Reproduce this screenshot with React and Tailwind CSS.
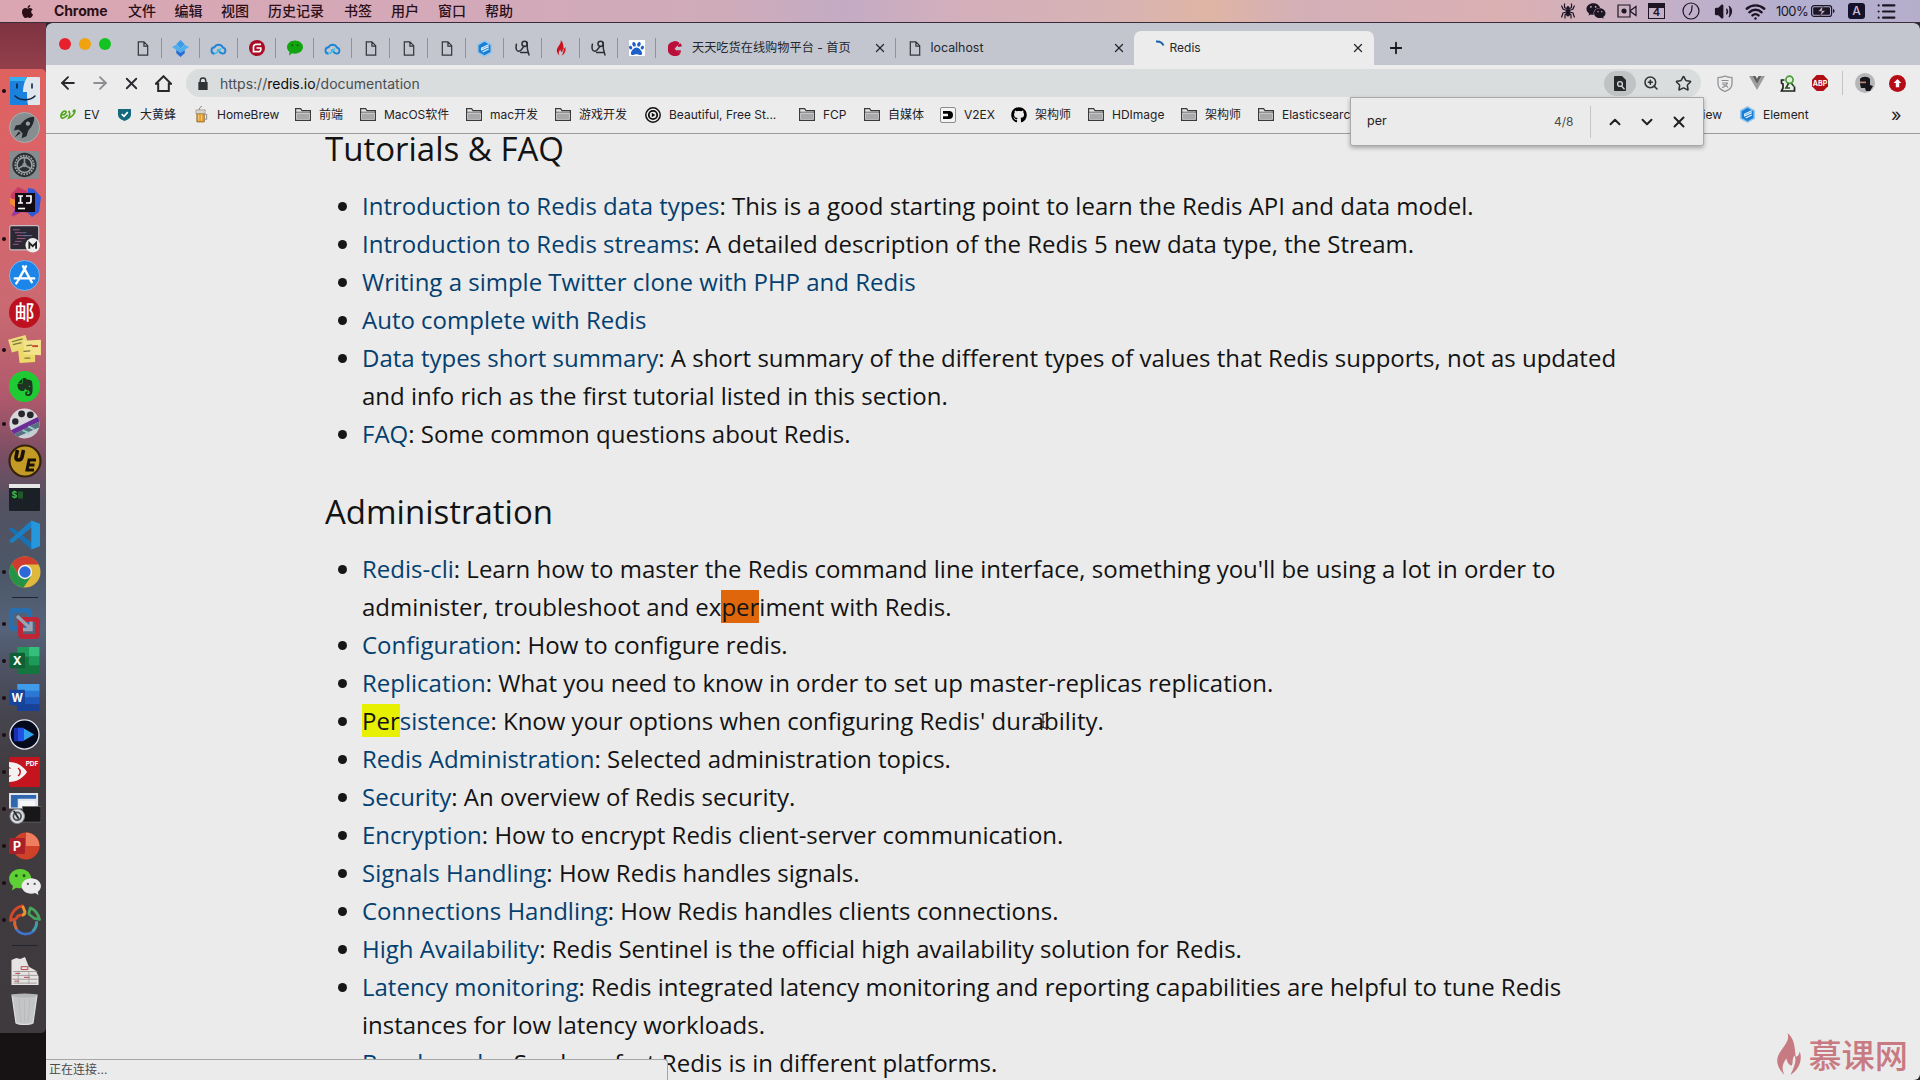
import { FaApple, FaWeixin, FaGithub, FaPaw } from "react-icons/fa";
import { SiEvernote } from "react-icons/si";
import { ArrowLeft, ArrowRight, X, Plus, Star, ZoomIn, ChevronUp, ChevronDown, Wifi, Volume2, List } from "lucide-react";

function Flame({ className }) {
  return (
    <svg viewBox="0 0 24 42" className={className} fill="currentColor">
      <path d="M11 0C14 8 6 14 2 22c-3 7 1 14 6 19C5 35 6 30 10 25c1 4 2 6 5 7 2-3 0-7 3-10 2 5 0 10-4 19 8-5 12-14 9-23-1 4-2 5-4 5C18 13 18 6 11 0Z" />
    </svg>
  );
}
function Page() {
  return (
    <svg viewBox="0 0 12 16" className="h-[15px] w-[12px]" fill="none" stroke="#33363b" strokeWidth="1.3">
      <path d="M1 1h6l4 4v10H1ZM7 1v4.5h4" />
    </svg>
  );
}
function Cloud() {
  return (
    <svg viewBox="0 0 18 14" className="h-[13px] w-[17px]" fill="none" stroke="#1b84d6" strokeWidth="2">
      <path d="M5 12.500a3.400 3.400 0 0 1-.3-6.800A5 5 0 0 1 13.800 6a3.300 3.300 0 0 1-.2 6.500c-2.600 0-4-2.500-5.600-4.300" />
      <path d="M4.500 12.500c2 0 3-1 4.200-2.300l3-3.200" stroke="#3ec3e8" />
    </svg>
  );
}
function Diamond() {
  return (
    <svg viewBox="0 0 16 16" className="size-[17px]">
      <path d="M8 0l4 4-4 4-4-4Z" fill="#3c9be8" />
      <path d="M0 6.500L4 4.500 8 8l4-3.500 4 2L8 12Z" fill="#4eb0ee" />
      <path d="M4 9.500l4 2.500 4-2.500v3L8 16l-4-3.500Z" fill="#2a6fd6" />
    </svg>
  );
}
function Gitee() {
  return (
    <svg viewBox="0 0 16 16" className="size-[16px]">
      <circle cx="8" cy="8" r="8" fill="#a80d24" />
      <path d="M12 4.300H7A2.500 2.500 0 0 0 4.500 6.800V11.700H9.500A2.200 2.200 0 0 0 11.800 9.500V8H7.500" fill="none" stroke="#fff" strokeWidth="1.700" />
    </svg>
  );
}
function ChatDot() {
  return (
    <svg viewBox="0 0 16 16" className="size-[16px]">
      <path d="M8 .5c4.500 0 8 2.900 8 6.600s-3.500 6.600-8 6.600c-1 0-1.900-.1-2.700-.4L2 15.500l.6-3.500C1 10.800 0 9.200 0 7.100 0 3.400 3.500.5 8 .5Z" fill="#12a50f" />
      <circle cx="5.300" cy="5.300" r="1" fill="#0a5d08" />
      <circle cx="10.700" cy="5.300" r="1" fill="#0a5d08" />
    </svg>
  );
}
function Element() {
  return (
    <svg viewBox="0 0 16 18" className="h-[17px] w-[15px]">
      <path d="M8 0l8 4.500v9L8 18l-8-4.500v-9Z" fill="#8fc5ee" />
      <path d="M8 1.800l6.300 3.600v7.200L8 16.200l-6.300-3.600V5.400Z" fill="#1a7fd4" />
      <path d="M12.500 5L5 8.500v2l7.500-3.500M12.500 9.600L6 12.800" fill="none" stroke="#e4f2fc" strokeWidth="1.300" />
    </svg>
  );
}
function Hook() {
  return (
    <svg viewBox="0 0 16 18" className="h-[17px] w-[15px]" fill="none" stroke="#2c2e35" strokeWidth="1.600" strokeLinecap="round">
      <path d="M1.500 4.500C.5 9 1.500 12 4 12c2.500 0 4-3.500 5.500-5.500" />
      <ellipse cx="10.200" cy="4" rx="2.800" ry="2.800" />
      <path d="M12.900 2.500c-.2 5 .2 9 2 13.500M6 13.200h7.500" />
    </svg>
  );
}
function Baidu() {
  return (
    <span className="flex size-[16px] items-center justify-center bg-white">
      <FaPaw className="size-[15px] text-[#1f5fc9]" />
    </span>
  );
}
function Pac() {
  return (
    <svg viewBox="0 0 16 16" className="size-[15px]">
      <path d="M12.500 2A8 8 0 1 0 12.800 14L7 8.200Z" fill="#b90f38" />
      <path d="M10 4.500L13.500 2.500l1.500 3-4 1Z M8.500 9.500l5.500.5-1.200 4Z" fill="#b90f38" />
    </svg>
  );
}
function Folder() {
  return (
    <svg viewBox="0 0 16 13" className="h-[13px] w-[16px]">
      <path d="M.6 12.400V.6h5l1.400 2h8.400v9.800Z" fill="#e4e4e4" stroke="#3a3a3a" strokeWidth="1.200" />
      <path d="M2 5.500h12V11H2Z" fill="#a9a9ab" />
      <path d="M.6 4.200h14.800" stroke="#3a3a3a" strokeWidth=".7" />
    </svg>
  );
}
function Ev() {
  return (
    <svg viewBox="0 0 16 10" className="h-[11px] w-[17px]" fill="none" stroke="#53a51c" strokeWidth="1.700" strokeLinecap="round">
      <path d="M1.500 5.500c4 .2 6-3.800 3.500-4C2.500 1.500.5 5 1 7.200 1.500 9.500 4.500 8.800 7 6M9 2c1 1.500.8 4-.3 6.500C11.500 7.500 15.500 4 14.800 1c-.8-.7-1.600.3-1.400 1.200" />
    </svg>
  );
}
function Shield() {
  return (
    <svg viewBox="0 0 14 14" className="h-[13px] w-[13px]">
      <path d="M0 1h14v6c0 4-4 6-7 7-3-1-7-3-7-7Z" fill="#16687c" />
      <path d="M4 6.500l2.500 2.500L10.500 4.500" fill="none" stroke="#fff" strokeWidth="1.800" />
    </svg>
  );
}
function Beer() {
  return (
    <svg viewBox="0 0 14 18" className="h-[17px] w-[13px]">
      <path d="M2 7h8v10H2Z" fill="#e2a13a" stroke="#8a5a1a" strokeWidth=".8" />
      <path d="M10 9h2.500v5H10" fill="none" stroke="#9a9a9a" strokeWidth="1.300" />
      <path d="M1 4h10v4H1Z" fill="#d9d4cd" stroke="#86817c" strokeWidth=".6" />
      <path d="M5 4c-1-2 1-3 2.500-4" stroke="#777" fill="none" />
      <path d="M4 9.500v6M7 9.500v6" stroke="#f6cf7c" />
    </svg>
  );
}
function PlayRing() {
  return (
    <svg viewBox="0 0 16 16" className="size-[16px]">
      <circle cx="8" cy="8" r="7.200" fill="none" stroke="#111" strokeWidth="1.500" />
      <circle cx="8" cy="8" r="4.200" fill="none" stroke="#111" strokeWidth="1.800" />
      <path d="M6.800 5.700l3.500 2.300-3.500 2.300Z" fill="#111" />
    </svg>
  );
}
function V2() {
  return (
    <span className="flex size-[16px] items-center justify-center rounded-[2px] border border-[#8c8c8c] bg-[#f4f4f4]">
      <svg viewBox="0 0 10 8" className="h-[8px] w-[10px]">
        <path d="M0 0h6a4 4 0 0 1 0 8H0V5.300h5V2.700H0Z" fill="#000" />
      </svg>
    </span>
  );
}
function Spider() {
  return (
    <svg viewBox="0 0 16 16" className="size-[16px]" fill="none" stroke="currentColor" strokeWidth="1.200">
      <ellipse cx="8" cy="9.500" rx="1.600" ry="3.500" fill="currentColor" />
      <circle cx="8" cy="4.500" r="1.500" fill="currentColor" stroke="none" />
      <path d="M7 6L4.500 4.500V.5M9 6l2.500-1.500V.5M6.500 7.500L3 6 1.500 2.500M9.500 7.500L13 6l1.500-3.500M6.500 9l-3.500 1L1.500 14.500M9.500 9l3.500 1 1.500 4.500M6.500 10.500L5 12v3.500M9.500 10.500L11 12v3.500" />
    </svg>
  );
}

const menus = [
  ["文件", "w-[46.500px]"],
  ["编辑", "w-[46.500px]"],
  ["视图", "w-[47px]"],
  ["历史记录", "w-[76px]"],
  ["书签", "w-[47px]"],
  ["用户", "w-[47px]"],
  ["窗口", "w-[47px]"],
  ["帮助", "w-[40px]"],
];

function MenuBar() {
  return (
    <div className="flex h-[23px] w-full shrink-0 items-center border-b border-[#3a2c3a] bg-[linear-gradient(90deg,#dba6b2_0%,#d3a9b9_25%,#cfabba_38%,#c4abc4_44%,#d3afbb_50%,#d8b3b4_58%,#dfb5a4_63%,#d3afb8_68%,#dbb0b3_78%,#d8b0b5_80%,#c3b0c8_87%,#b2afd0_94%,#b5aecb_100%)] pl-[20px] text-[14px] leading-[22px] font-medium text-[#2a0f18]">
      <FaApple className="size-[15px]" />
      <span className="ml-[19px] w-[74px] font-bold tracking-[-0.100px]">Chrome</span>
      {menus.map(([t, w]) => (
        <span key={t} className={w + " shrink-0"}>{t}</span>
      ))}
      <div className="flex-1" />
      <div className="flex h-full w-[364px] shrink-0 items-center text-[#1d1524]">
        <span className="flex w-[24px] justify-center"><Spider /></span>
        <span className="flex w-[26px] justify-end"><FaWeixin className="size-[20px]" /></span>
        <svg viewBox="0 0 20 14" className="ml-[11px] h-[14px] w-[20px]" fill="none" stroke="currentColor" strokeWidth="1.200">
          <path d="M1 1h12v12H1ZM13.500 6.500L19 2.500v9l-5.500-4" /><circle cx="7" cy="7" r="2" fill="currentColor" />
        </svg>
        <span className="ml-[11px] flex h-[16px] w-[17px] items-end justify-center border border-t-[5px] border-current text-[11px] leading-[11px] font-semibold">4</span>
        <svg viewBox="0 0 18 18" className="ml-[17px] size-[18px]" fill="none" stroke="currentColor" strokeWidth="1.200">
          <circle cx="9" cy="9" r="8" /><path d="M10.200 3.200L9.500 9l-2.500 4" />
        </svg>
        <Volume2 className="ml-[14px] size-[19px]" fill="currentColor" strokeWidth={1.700} />
        <Wifi className="ml-[12px] size-[21px]" strokeWidth={2.800} />
        <span className="ml-[10px] w-[35px] text-[13px] font-normal tracking-[-0.600px]">100%</span>
        <svg viewBox="0 0 24 12" className="h-[12px] w-[24px]">
          <rect x=".6" y=".6" width="20" height="10.800" rx="2.500" fill="none" stroke="currentColor" strokeWidth="1.200" />
          <rect x="2.200" y="2.200" width="16.800" height="7.600" rx="1" fill="currentColor" />
          <path d="M12.500 0L7 6.500h3.500L8.500 12l6-6.500H11Z" fill="#bfb0c8" stroke="#1d1524" strokeWidth=".6" />
          <path d="M22 4v4c1-.4 1.500-1 1.500-2S23 4.400 22 4Z" fill="currentColor" />
        </svg>
        <span className="ml-[13px] flex h-[16px] w-[17px] items-center justify-center rounded-[3px] bg-[#14122a] text-[12px] text-[#c9bcd2]">A</span>
        <List className="ml-[11px] size-[21px]" strokeWidth={2.400} />
      </div>
    </div>
  );
}

const pinned = [Page, Diamond, Cloud, Gitee, ChatDot, Cloud, Page, Page, Page, Element, Hook, () => <Flame className="h-[16px] w-[10px] text-[#c9141e]" />, Hook, Baidu];

function TabStrip() {
  return (
    <div className="flex h-[42px] shrink-0 items-center rounded-t-[6px] bg-[#c3c6cf] pl-[13px]">
      <div className="flex w-[65px] shrink-0 gap-[8px]">
        <span className="size-[12px] rounded-full bg-[#e8202c]" />
        <span className="size-[12px] rounded-full bg-[#f0a30d]" />
        <span className="size-[12px] rounded-full bg-[#12c321]" />
      </div>
      {pinned.map((Icon, i) => (
        <span key={i} className="mt-[8px] flex h-[20px] w-[38px] shrink-0 items-center justify-center border-r border-[#8f929b]">
          <Icon />
        </span>
      ))}
      <div className="mt-[8px] flex h-[20px] w-[239.500px] shrink-0 items-center border-r border-[#8f929b] pl-[12px] text-[12.200px] text-[#24262c]">
        <Pac />
        <span className="ml-[9px] w-[176px] whitespace-nowrap">天天吃货在线购物平台 - 首页</span>
        <X className="ml-[5px] size-[14px]" strokeWidth={2.200} />
      </div>
      <div className="mt-[8px] flex h-[20px] w-[238px] shrink-0 items-center pl-[13px] text-[12.400px] text-[#24262c]">
        <Page />
        <span className="ml-[10px] w-[176px]">localhost</span>
        <X className="ml-[5px] size-[14px]" strokeWidth={2.200} />
      </div>
      <div className="mt-[8px] flex h-[34px] w-[240px] shrink-0 items-center rounded-t-[7px] bg-[#ececec] pl-[16px] text-[12px] text-[#24262c]">
        <svg viewBox="0 0 16 16" className="size-[16px]" fill="none" stroke="#1d5fa8" strokeWidth="2"><path d="M6 1.500c4-.3 6.500 1.500 7.500 4" /></svg>
        <span className="ml-[4px] w-[181px]">Redis</span>
        <X className="size-[14px]" strokeWidth={2.200} />
      </div>
      <Plus className="mt-[8px] ml-[13px] size-[18px] text-[#17181c]" strokeWidth={2.400} />
    </div>
  );
}

function Toolbar() {
  return (
    <div className="flex h-[36px] shrink-0 items-center bg-[#ececec] pl-[12px] text-[#27292d]">
      <span className="flex w-[32px] shrink-0"><ArrowLeft className="size-[20px]" strokeWidth={2.300} /></span>
      <span className="flex w-[32px] shrink-0 text-[#8d8f92]"><ArrowRight className="size-[20px]" strokeWidth={2.300} /></span>
      <span className="flex w-[33px] shrink-0"><X className="size-[19px]" strokeWidth={2.300} /></span>
      <svg viewBox="0 0 16 16" className="size-[17px] shrink-0" fill="none" stroke="currentColor" strokeWidth="1.900"><path d="M.8 8.300L8 1.200l7.200 7.100H13V15H3V8.300Z" /></svg>
      <div className="ml-[14px] flex h-[28px] w-[1515px] shrink-0 items-center rounded-full bg-[#dadddd] pl-[12px] text-[14px] text-[#4a4d52]">
        <svg viewBox="0 0 10 14" className="h-[13px] w-[10px]"><path d="M0 5.500h10V14H0Z" fill="#303236" /><path d="M2 6V4a3 3 0 0 1 6 0v2" fill="none" stroke="#303236" strokeWidth="1.500" /></svg>
        <span className="ml-[12px] whitespace-nowrap">https://<span className="text-[#0b0c0d]">redis.io</span>/documentation</span>
        <div className="flex-1" />
        <span className="flex h-[25px] w-[32px] items-center justify-center rounded-full bg-[#c0c3c4]">
          <svg viewBox="0 0 12 15" className="h-[15px] w-[12px]"><path d="M1 0h7l4 4v10a1 1 0 0 1-1 1H1a1 1 0 0 1-1-1V1a1 1 0 0 1 1-1Z" fill="#26282b" /><circle cx="6" cy="8" r="2.400" fill="none" stroke="#d5d7d8" strokeWidth="1.300" /><path d="M7.500 10l3 3.300" stroke="#d5d7d8" strokeWidth="1.300" /></svg>
        </span>
        <ZoomIn className="ml-[7px] size-[16px] text-[#2f3135]" strokeWidth={2.300} />
        <Star className="mr-[9px] ml-[16px] size-[17px] text-[#2f3135]" strokeWidth={2.200} />
      </div>
      <svg viewBox="0 0 16 17" className="ml-[16px] h-[17px] w-[16px] shrink-0" fill="none" stroke="#8b8d90" strokeWidth="1.200"><path d="M8 1c2 1 4 1.500 7 1.500V9c0 4-3 6-7 7.500C4 15 1 13 1 9V2.500C4 2.500 6 2 8 1ZM4.500 5.500h7M5 8h6M10.500 8c-1 2-3 4-5.500 4.500M5.500 9.500c2 0 4 1 5.500 3" /></svg>
      <svg viewBox="0 0 16 14" className="ml-[16px] h-[14px] w-[16px] shrink-0"><path d="M0 0h3.500L8 8l4.500-8H16L8 14Z" fill="#9b9d9f" /><path d="M3.500 0H6.500L8 2.800 9.500 0h3L8 8Z" fill="#5d5f62" /></svg>
      <svg viewBox="0 0 16 17" className="ml-[15px] h-[17px] w-[16px] shrink-0" fill="none" strokeWidth="1.700"><path d="M4.500 5H1.500v3l1.500 1v4l-1.500 3H14.500v-4.500" stroke="#1b2418" /><circle cx="9.500" cy="4.800" r="3.600" fill="#dff0d8" stroke="#4c9a3c" /><path d="M8.500 8.500L6 13h4M11.500 8.500l2.500 3" stroke="#264d1e" /></svg>
      <svg viewBox="0 0 16 16" className="ml-[16px] size-[16px] shrink-0"><path d="M4.700 0h6.600L16 4.700v6.600L11.300 16H4.700L0 11.300V4.700Z" fill="#b00d15" /><text x="8" y="10.600" fontSize="7" fontWeight="700" textAnchor="middle" fill="#fff">ABP</text></svg>
      <span className="ml-[14px] h-[24px] w-px shrink-0 bg-[#c4c4c4]" />
      <span className="ml-[12px] flex size-[20px] shrink-0 items-center justify-center rounded-full bg-[#b5b6b8]">
        <svg viewBox="0 0 16 16" className="size-[16px]"><path d="M3 4c2-3 8-3 10 0v6l3 1-3 5H9l-1-3H4L3 9Z" fill="#17161a" /><path d="M3 6.500h6v1.700H3Z" fill="#b98572" /></svg>
      </span>
      <svg viewBox="0 0 16 16" className="ml-[14px] size-[17px] shrink-0"><circle cx="8" cy="8" r="8" fill="#b50d18" /><path d="M8 3.800l3.600 3.800H9.600V11.500H6.400V7.600H4.400Z" fill="#fff" /></svg>
    </div>
  );
}

const marks = [
  ["EV", Ev, "w-[56px]"],
  ["大黄蜂", Shield, "w-[77px]"],
  ["HomeBrew", Beer, "w-[102px]"],
  ["前端", Folder, "w-[65px]"],
  ["MacOS软件", Folder, "w-[106px]"],
  ["mac开发", Folder, "w-[89px]"],
  ["游戏开发", Folder, "w-[90px]"],
  ["Beautiful, Free St...", PlayRing, "w-[154px]"],
  ["FCP", Folder, "w-[65px]"],
  ["自媒体", Folder, "w-[76px]"],
  ["V2EX", V2, "w-[71px]"],
  ["架构师", () => <FaGithub className="size-[16px] text-black" />, "w-[77px]"],
  ["HDImage", Folder, "w-[93px]"],
  ["架构师", Folder, "w-[77px]"],
  ["Elasticsearc", Folder, "w-[389px]"],
];
function Mark({ label, Icon, w }) {
  return (
    <span className={w + " flex shrink-0 items-center gap-[8px] whitespace-nowrap"}>
      <span className="flex w-[16px] shrink-0 justify-center"><Icon /></span>
      <span>{label}</span>
    </span>
  );
}
function Bookmarks() {
  return (
    <div className="relative flex h-[33px] shrink-0 items-center border-b border-[#9b9b9b] bg-[#ececec] pb-[5px] pl-[14px] text-[12px] text-[#1f2124]">
      {marks.map(([label, Icon, w], i) => <Mark key={i} label={label} Icon={Icon} w={w} />)}
      <span className="w-[92px] shrink-0 pr-[17px] text-right">iew</span>
      <Mark label="Element" Icon={Element} w="w-[152px]" />
      <span className="text-[18px] leading-[18px]">»</span>
      <div className="absolute top-[-4px] left-[1304px] flex h-[49px] w-[354px] items-center rounded-b-[3px] border border-[#a9a9a9] bg-[#ebebeb] pl-[16px] text-[12.500px] shadow-[0_2px_4px_rgba(0,0,0,0.3)]">
        <span className="w-[187px]">per</span>
        <span className="w-[36px] text-[12px] text-[#4a4c50]">4/8</span>
        <span className="h-[32px] w-px bg-[#c6c6c6]" />
        <ChevronUp className="ml-[15px] size-[18px]" strokeWidth={2.600} />
        <ChevronDown className="ml-[14px] size-[18px]" strokeWidth={2.600} />
        <X className="ml-[14px] size-[18px]" strokeWidth={2.600} />
      </div>
    </div>
  );
}

const shell = "size-[31px]";
const icons = {
  finder: (
    <svg viewBox="0 0 30 28" className="h-[28px] w-[30px]">
      <rect width="30" height="28" rx="1" fill="#dfe6ee" />
      <path d="M0 0h17c-3 5-4 10-4 15h4c0 5 0 9 1 13H0Z" fill="#1a82de" />
      <path d="M0 0h17l-2 4H0Z" fill="#34b0ef" />
      <path d="M7 7v4M22 7v4M5 19c5 5 15 5 20 0" stroke="#10253f" strokeWidth="1.600" fill="none" strokeLinecap="round" />
    </svg>
  ),
  rocket: (
    <svg viewBox="0 0 32 32" className={shell}>
      <circle cx="16" cy="16" r="15.500" fill="#868e91" stroke="#a9afb1" />
      <path d="M26 5c-7 0-11 4-14 8l-5 1-2 5 5-1 4 4-1 5 5-2 2-6c4-4 6-8 6-14Z" fill="#22272b" />
      <circle cx="19.500" cy="12" r="2.200" fill="#9aa1a4" /><path d="M10 20l-4 6 6-4Z" fill="#22272b" />
    </svg>
  ),
  gear: (
    <svg viewBox="0 0 32 30" className="h-[28px] w-[31px]">
      <rect width="32" height="30" rx="2" fill="#858b8e" />
      <circle cx="16" cy="15" r="13" fill="#2c3033" />
      <circle cx="16" cy="15" r="10" fill="none" stroke="#a3a8ab" strokeWidth="1.800" strokeDasharray="1.800 1.200" />
      <circle cx="16" cy="15" r="8" fill="none" stroke="#a3a8ab" strokeWidth="1.600" />
      <path d="M16 15V7M16 15l7 4M16 15l-7 4" stroke="#8f9598" strokeWidth="1.800" />
      <circle cx="16" cy="15" r="2.300" fill="#8f9598" />
    </svg>
  ),
  idea: (
    <svg viewBox="0 0 32 32" className="size-[32px]">
      <path d="M2 8l7-7 9 4 2 22-8-1-8 5 2-8-5-5Z" fill="#c83a6a" />
      <path d="M1 12l6 2v8l-6-4Z" fill="#f08a35" /><path d="M2 30l5-8 6 4Z" fill="#8e3bb0" />
      <path d="M19 2l6 1 7 8-2 15-7 5-6-6Z" fill="#3059d8" />
      <rect x="6" y="7" width="20" height="19" fill="#120b12" />
      <path d="M9 10h5M11.500 10v7M9 17h5M17 10h5v5c0 1.500-1 2-2 2h-3" stroke="#fff" strokeWidth="1.700" fill="none" />
      <path d="M9 22.500h7" stroke="#fff" strokeWidth="1.600" />
    </svg>
  ),
  editor: (
    <svg viewBox="0 0 32 29" className="h-[28px] w-[31px]">
      <rect x=".7" y=".7" width="30" height="25" rx="2" fill="#2b2733" stroke="#c6bcc5" strokeWidth="1.200" />
      <path d="M4 5h7M6 8h8M8 11h11M8 14h9M6 17h7M4 20h6" stroke="#9a5a86" strokeWidth="1" />
      <path d="M15 11h9M14 8h4" stroke="#5b77a8" strokeWidth="1" />
      <circle cx="24.500" cy="21" r="7.500" fill="#eee" />
      <path d="M21 24.500v-6l3.500 3.500 3.500-3.500v6" stroke="#222" strokeWidth="1.900" fill="none" />
    </svg>
  ),
  appstore: (
    <svg viewBox="0 0 32 32" className={shell}>
      <circle cx="16" cy="16" r="15.500" fill="#1c85ea" stroke="#8cc4f4" strokeWidth=".8" />
      <path d="M17.500 6.500L9.500 21M14.500 6.500L23.500 23M6 19h20" stroke="#fff" strokeWidth="2.500" strokeLinecap="round" /><path d="M8.500 22.500l-1 1.700" stroke="#fff" strokeWidth="2.400" strokeLinecap="round" />
    </svg>
  ),
  mail: <span className="flex size-[31px] items-center justify-center rounded-full bg-[#bd1120] text-[20px] leading-none font-medium text-white">邮</span>,
  notes: (
    <svg viewBox="0 0 34 30" className="h-[29px] w-[33px]">
      <path d="M0 5L18 0l4 13L4 18Z" fill="#e9dc79" /><path d="M10 13l18-1v16l-16 1Z" fill="#ecd96a" /><path d="M16 6l18-1v16l-17-1Z" fill="#f3e48c" />
      <path d="M4 7l11-3M5 10l9-2M19 11l6-.5M16 17l7-.5M17 24h6" stroke="#7e743b" strokeWidth="1.300" /><path d="M25 11.500h6" stroke="#c8452f" strokeWidth="2" />
    </svg>
  ),
  evernote: <span className="flex size-[31px] items-center justify-center rounded-full bg-[#1fcb33]"><SiEvernote className="size-[18px] text-[#1c3420]" /></span>,
  reel: (
    <svg viewBox="0 0 32 32" className={shell}>
      <circle cx="16" cy="16" r="15.500" fill="#d8d8dc" />
      <circle cx="13" cy="6" r="3.500" fill="#26262c" /><circle cx="22" cy="7" r="3.500" fill="#26262c" /><circle cx="6.500" cy="14" r="3.300" fill="#26262c" />
      <path d="M2 23L30 9l1.500 5L5 27Z" fill="#6b2c96" /><path d="M5 27l26.500-13-.5 6-22 10Z" fill="#5a6f80" />
      <path d="M10 29.500l21-9-3 5.500-10 5Z" fill="#c5ced3" /><path d="M14 23l7 3M20 19l6 3" stroke="#8fd0c0" strokeWidth="2" />
    </svg>
  ),
  ue: (
    <svg viewBox="0 0 34 34" className="size-[34px]">
      <circle cx="17" cy="17" r="15.500" fill="#c39a25" stroke="#33230b" strokeWidth="2.200" />
      <path d="M9.500 6L8 13c-.7 4 5 4 6 0l1.500-7" stroke="#17110a" strokeWidth="3.600" fill="none" />
      <path d="M28 16h-7l-2 10h7M20 21h6.500" stroke="#17110a" strokeWidth="3" fill="none" />
    </svg>
  ),
  terminal: (
    <svg viewBox="0 0 31 27" className="h-[27px] w-[31px]">
      <rect width="31" height="27" rx="1" fill="#1a2025" /><path d="M0 0h31v4H0Z" fill="#e6e8e8" />
      <text x="2.500" y="13.500" fontSize="9" fontWeight="700" fill="#3fb84a">$</text><path d="M9 7.500h5v7H9Z" fill="#1f5a2b" />
    </svg>
  ),
  vscode: (
    <svg viewBox="0 0 32 30" className="h-[30px] w-[31px]">
      <path d="M0 9l3-2 22 17-2 6Z" fill="#1672b4" /><path d="M0 21l3 2.500L25 6l-2-6Z" fill="#1a80c6" />
      <path d="M23 0l9 3.500v23L23 30Z" fill="#2497df" />
    </svg>
  ),
  chrome: (
    <svg viewBox="0 0 32 32" className="size-[32px]">
      <circle cx="16" cy="16" r="15.500" fill="#e0b93c" />
      <path d="M16 .5A15.500 15.500 0 0 1 29.600 8.500H16L9.500 19.500 2.800 7.800A15.500 15.500 0 0 1 16 .5Z" fill="#cf3b2c" />
      <path d="M2.800 7.800A15.500 15.500 0 0 0 14.500 31.500L22.500 19.800 16 23.500 9.500 19.500Z" fill="#259347" />
      <circle cx="16" cy="16" r="7.200" fill="#f3f3f3" /><circle cx="16" cy="16" r="5.700" fill="#2c68da" />
    </svg>
  ),
  vmware: (
    <svg viewBox="0 0 31 32" className="h-[32px] w-[31px]">
      <rect x="2.500" y="2.500" width="18" height="18" rx="2" fill="none" stroke="#286fb2" strokeWidth="5" />
      <rect x="11.500" y="11.500" width="17" height="17" rx="2" fill="none" stroke="#c02536" strokeWidth="5" />
      <path d="M8 8l13 12M22 13.500v8h-8" fill="none" stroke="#98a3b3" strokeWidth="3.400" />
    </svg>
  ),
  excel: (
    <svg viewBox="0 0 31 28" className="h-[27px] w-[31px]">
      <path d="M8 0h23v28H8Z" fill="#15753f" /><path d="M8 0h12v10H8Z" fill="#209b59" /><path d="M20 0h11v10H20Z" fill="#35bf7c" /><path d="M20 10h11v9H20Z" fill="#1d9a57" />
      <rect y="6" width="16" height="16" rx="1" fill="#0f6034" /><text x="8" y="18.500" fontSize="12.500" fontWeight="700" textAnchor="middle" fill="#fff">X</text>
    </svg>
  ),
  word: (
    <svg viewBox="0 0 31 28" className="h-[27px] w-[31px]">
      <path d="M8 0h23v8H8Z" fill="#3f9ceb" /><path d="M8 7h23v7H8Z" fill="#2a78d3" /><path d="M8 14h23v7H8Z" fill="#1d59bd" /><path d="M8 21h23v7H8Z" fill="#17429a" />
      <rect y="6" width="16" height="16" rx="1" fill="#17449c" /><text x="8" y="18.500" fontSize="11.500" fontWeight="700" textAnchor="middle" fill="#fff">W</text>
    </svg>
  ),
  player: (
    <svg viewBox="0 0 32 32" className={shell}>
      <circle cx="16" cy="16" r="15" fill="#05091c" stroke="#dfe4ea" strokeWidth="1.300" />
      <path d="M5 9h4v14H5Z" fill="#1b2fae" /><path d="M9 9h6v14H9Z" fill="#2350e4" /><path d="M15 9.500L26 16l-11 6.500Z" fill="#2fa4ec" />
    </svg>
  ),
  pdf: (
    <svg viewBox="0 0 31 30" className="h-[30px] w-[31px]">
      <rect width="31" height="30" rx="2" fill="#c4141e" />
      <path d="M0 5c8 0 14 4 18 10-4 6-10 10-18 10v-5a5.500 5.500 0 0 0 0-10Z" fill="#f2f2f2" /><circle cx="1" cy="15" r="3.500" fill="#f2f2f2" /><path d="M9 11c3 2 3 6 0 8" stroke="#c4141e" fill="none" strokeWidth="1.500" />
      <text x="23" y="9" fontSize="6.500" fontWeight="700" textAnchor="middle" fill="#fff">PDF</text>
    </svg>
  ),
  vnc: (
    <svg viewBox="0 0 33 33" className="size-[32px]">
      <path d="M0 0h30v16H0Z" fill="#dfe5ee" /><path d="M2 2h26v4H9v9H2Z" fill="#2e67b0" /><path d="M11 8h16v7H11Z" fill="#f4f6f8" />
      <rect x="14" y="14" width="19" height="16" fill="#17171a" stroke="#666" strokeWidth=".8" />
      <circle cx="8.500" cy="24" r="7.500" fill="#d9dbde" stroke="#8b8f96" /><circle cx="8.500" cy="24" r="4" fill="none" stroke="#4c5057" strokeWidth="1.800" /><path d="M5 18.500l5 8" stroke="#2c2f35" strokeWidth="2" />
    </svg>
  ),
  ppt: (
    <svg viewBox="0 0 31 28" className="h-[28px] w-[31px]">
      <circle cx="17" cy="14" r="13.500" fill="#d0412a" /><path d="M17 .5A13.500 13.500 0 0 1 30.500 14H17Z" fill="#ee7e5e" />
      <rect y="6" width="16" height="16" rx="1" fill="#a9202a" /><text x="8" y="18.500" fontSize="12.500" fontWeight="700" textAnchor="middle" fill="#fff">P</text>
    </svg>
  ),
  wechat: (
    <svg viewBox="0 0 33 28" className="h-[27px] w-[32px]">
      <path d="M11.500 0C18 0 23 4.500 23 10s-5 10-11.500 10c-1.500 0-3-.2-4-.6L3 22l1-4.500C1.500 15.500 0 13 0 10 0 4.500 5 0 11.500 0Z" fill="#5fcf36" />
      <circle cx="7.500" cy="7" r="1.500" fill="#1d5a12" /><circle cx="15.500" cy="7" r="1.500" fill="#1d5a12" />
      <path d="M23 9.500c5.500 0 10 3.700 10 8.200 0 2.500-1.300 4.600-3.300 6.100l.8 3.200-3.500-2c-1.200.5-2.500.7-4 .7-5.500 0-10-3.500-10-8s4.500-8.200 10-8.200Z" fill="#ececee" />
      <circle cx="19.500" cy="15.500" r="1.200" fill="#555" /><circle cx="26.500" cy="15.500" r="1.200" fill="#555" />
    </svg>
  ),
  navicat: (
    <svg viewBox="0 0 33 33" className="size-[32px]" fill="none" strokeWidth="2.800" strokeLinejoin="round">
      <path d="M14 2C7 3 2 9 1.500 17l6-2c1-3 3-4 6-3.500 2-.5 2.500-2 2.500-4Z" stroke="#d4492c" />
      <path d="M14 2l2.500 6c0 2-1 3.500-3 3.500" stroke="#e09a31" />
      <path d="M22 4c5 2 8 6 9.500 12l-6-1.500c-2-3-5-2.500-5-5Z" stroke="#4aa35c" />
      <path d="M6 17c-1 8 4 14 11 14s12-5 11.500-13" stroke="#3f74c8" />
      <path d="M6 17c-.5 3 0 6 2 9" stroke="#d8662f" /><path d="M28.500 18c0 4-1 7-4 10" stroke="#3fa0a6" />
    </svg>
  ),
  docs: (
    <svg viewBox="0 0 30 30" className="h-[29px] w-[30px]">
      <path d="M1 3l5-2 4 1 5-2 4 10 7 4 3 6v9H1Z" fill="#e6e3e3" />
      <path d="M3 15h25M2 19h26M2 23h26M3 27h24" stroke="#98918f" strokeWidth=".9" /><path d="M11 10h7v3h-7ZM5 17h5M14 21h6M4 25h5" stroke="#b5434b" fill="none" /><path d="M8 15v13M19 15v13" stroke="#98918f" strokeWidth=".7" />
    </svg>
  ),
  trash: (
    <svg viewBox="0 0 27 32" className="h-[32px] w-[27px]">
      <path d="M1 2h25l-4 28c-3 2-14 2-17 0Z" fill="#c4c5c6" stroke="#dddedf" strokeWidth="1.200" />
      <ellipse cx="13.500" cy="2.500" rx="12.500" ry="2" fill="#b4b5b6" />
      <path d="M8 6l2 23M19 6l-2 23M13.500 6v23" stroke="#b6b7b9" strokeWidth=".8" />
    </svg>
  ),
};
const dock = [
  ["finder", 1], ["rocket"], ["gear"], ["idea"], ["editor", 1], ["appstore"], ["mail"], ["notes", 1], ["evernote"], ["reel", 1], ["ue"], ["terminal"], ["vscode"], ["chrome", 1], ["-"],
  ["vmware", 1], ["excel", 1], ["word", 1], ["player", 1], ["pdf", 1], ["vnc", 1], ["ppt", 1], ["wechat", 1], ["navicat", 1], ["-"],
  ["docs"], ["trash"],
];
function Dock() {
  return (
    <div className="flex w-[46px] shrink-0 flex-col bg-[linear-gradient(180deg,#7e3340_0px,#94404c_48px,#151113_960px,#171214_1058px)]">
      <div className="mt-[46px] flex h-[964px] flex-col rounded-r-[5px] bg-[linear-gradient(180deg,#e0625f_0%,#d9636a_12%,#c96a72_25%,#b0596c_34%,#7a4e63_40%,#535262_45%,#4b5767_52%,#55637a_58%,#4e5264_62%,#46454f_67%,#403b3f_73%,#3f3a3d_100%)] pt-[3px]">
        {dock.map(([name, run], i) =>
          name === "-" ? (
            <div key={i} className="flex h-[15px] shrink-0 items-center justify-center pl-[3px]"><span className="h-px w-[26px] bg-[#22252d]" /></div>
          ) : (
            <div key={i} className="flex h-[37px] shrink-0 items-center pl-[2px]">
              <span className={run ? "size-[4px] rounded-full bg-[#1c0d12]" : "size-[4px]"} />
              <span className="flex w-[37px] shrink-0 justify-center">{icons[name]}</span>
            </div>
          )
        )}
      </div>
    </div>
  );
}

function A({ children }) {
  return <span className="text-[#04406f]">{children}</span>;
}
function Item({ children }) {
  return (
    <li className="relative whitespace-nowrap">
      <span className="absolute top-[15px] left-[-24px] size-[9px] rounded-full bg-[#161616]" />
      {children}
    </li>
  );
}
function Content() {
  return (
    <main className="flex min-h-0 flex-1 flex-col overflow-hidden bg-[#ebebeb] pl-[279px] font-['Open_Sans',sans-serif] text-[24px] leading-[38px] text-[#131313]">
      <h2 className="h-[40px] shrink-0 text-[33px] leading-[30px]">Tutorials &amp; FAQ</h2>
      <ul className="mt-[13px] pl-[37px]">
        <Item><A>Introduction to Redis data types</A>: This is a good starting point to learn the Redis API and data model.</Item>
        <Item><A>Introduction to Redis streams</A>: A detailed description of the Redis 5 new data type, the Stream.</Item>
        <Item><A>Writing a simple Twitter clone with PHP and Redis</A></Item>
        <Item><A>Auto complete with Redis</A></Item>
        <Item><A>Data types short summary</A>: A short summary of the different types of values that Redis supports, not as updated<br />and info rich as the first tutorial listed in this section.</Item>
        <Item><A>FAQ</A>: Some common questions about Redis.</Item>
      </ul>
      <h2 className="mt-[39px] h-[40px] shrink-0 text-[33px] leading-[40px]">Administration</h2>
      <ul className="mt-[18px] pl-[37px]">
        <Item><A>Redis-cli</A>: Learn how to master the Redis command line interface, something you'll be using a lot in order to<br />administer, troubleshoot and ex<span className="bg-[#e0660c]">per</span>iment with Redis.</Item>
        <Item><A>Configuration</A>: How to configure redis.</Item>
        <Item><A>Replication</A>: What you need to know in order to set up master-replicas replication.</Item>
        <Item>
          <span className="bg-[#e6f000]">Per</span><A>sistence</A>: Know your options when configuring Redis' dur
          <span className="relative">
            a
            <svg viewBox="0 0 9 18" className="absolute top-[9px] left-[8px] h-[16px] w-[8px]" fill="none" stroke="#222" strokeWidth="1.300">
              <path d="M1 1c2 0 3.500.5 3.500 2v12c0 1.500-1.500 2-3.500 2M8 1C6 1 4.500 1.500 4.500 3M8 17c-2 0-3.500-.5-3.500-2M2.500 10h4" />
            </svg>
          </span>
          bility.
        </Item>
        <Item><A>Redis Administration</A>: Selected administration topics.</Item>
        <Item><A>Security</A>: An overview of Redis security.</Item>
        <Item><A>Encryption</A>: How to encrypt Redis client-server communication.</Item>
        <Item><A>Signals Handling</A>: How Redis handles signals.</Item>
        <Item><A>Connections Handling</A>: How Redis handles clients connections.</Item>
        <Item><A>High Availability</A>: Redis Sentinel is the official high availability solution for Redis.</Item>
        <Item><A>Latency monitoring</A>: Redis integrated latency monitoring and reporting capabilities are helpful to tune Redis<br />instances for low latency workloads.</Item>
        <Item><A>Benchmarks</A>: See how fast Redis is in different platforms.</Item>
      </ul>
    </main>
  );
}

export default function App() {
  return (
    <div className="flex h-[1080px] w-[1920px] flex-col overflow-hidden bg-[#2a2530] font-['Inter','Noto_Sans_CJK_SC',sans-serif]">
      <MenuBar />
      <div className="flex min-h-0 flex-1">
        <Dock />
        <div className="relative flex min-w-0 flex-1 flex-col overflow-hidden rounded-[6px] rounded-bl-none">
          <TabStrip />
          <Toolbar />
          <Bookmarks />
          <Content />
          <div className="absolute bottom-0 left-0 flex h-[21px] w-[622px] items-center rounded-tr-[4px] border-t border-r border-[#a6a6a6] bg-[#ebebeb] pl-[3px] text-[12px] text-[#4b4b4b]">正在连接...</div>
          <div className="absolute right-[12px] bottom-[4px] flex items-center text-[#c87a82]">
            <Flame className="mt-[-2px] h-[43px] w-[25px]" />
            <span className="ml-[7px] text-[33.200px] leading-[40px] font-medium">慕课网</span>
          </div>
        </div>
      </div>
    </div>
  );
}
